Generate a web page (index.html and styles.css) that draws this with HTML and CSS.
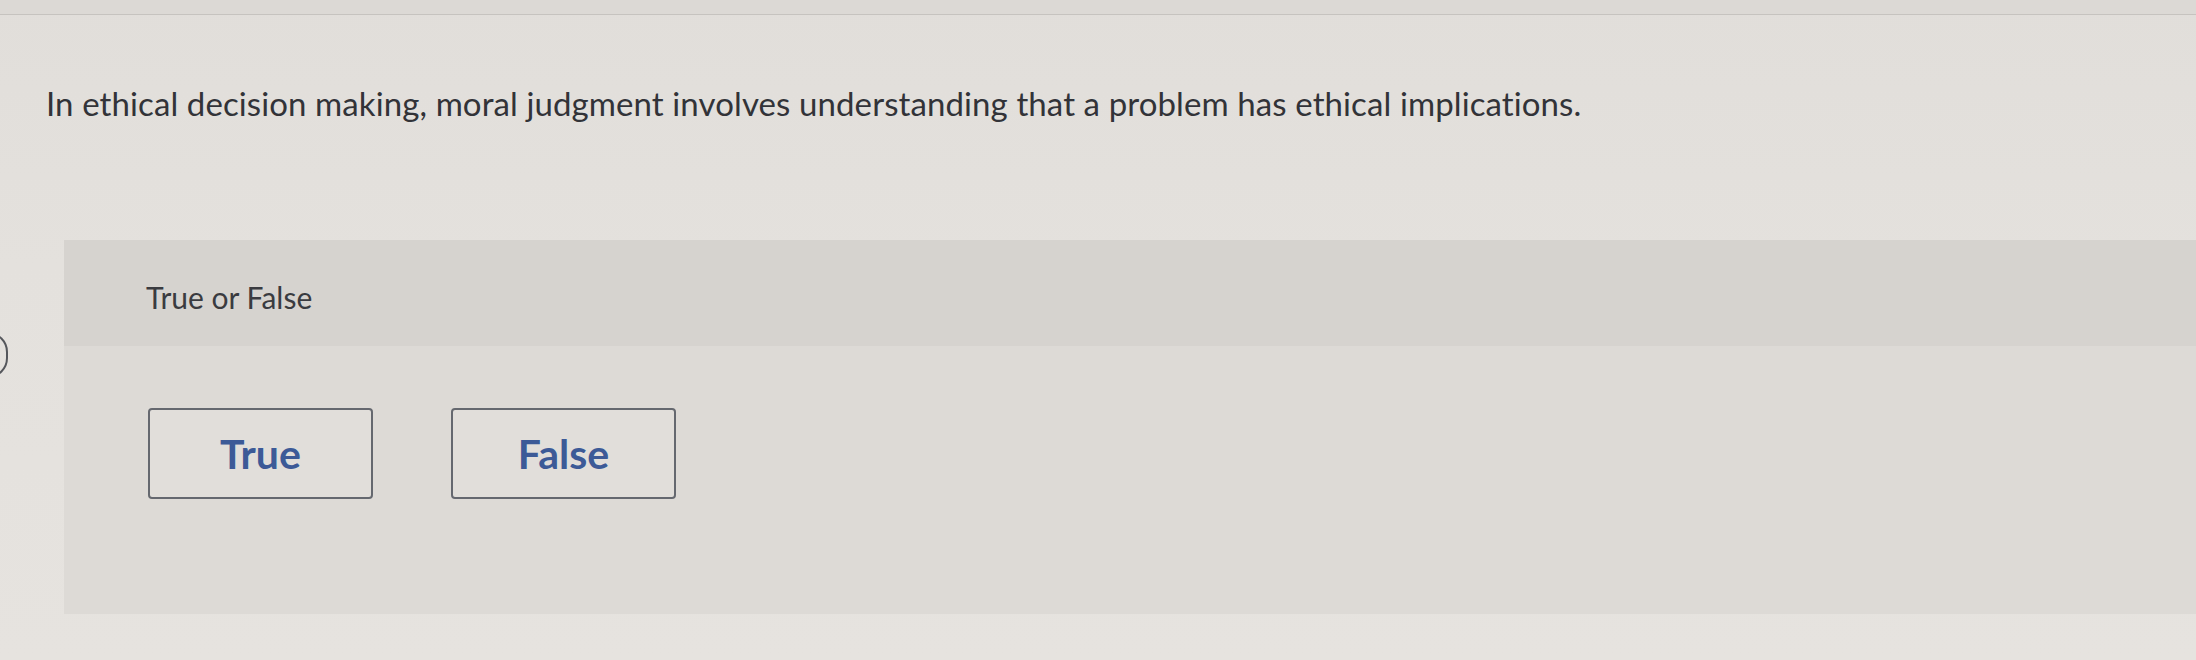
FILE: index.html
```html
<!DOCTYPE html>
<html lang="en">
<head>
  <meta charset="UTF-8">
  <title>True or False</title>
  <link rel="stylesheet" href="styles.css">
</head>
<body>
  <div class="top-strip"></div>

  <span class="side-handle"></span>

  <div class="prompt">
    <p>In ethical decision making, moral judgment involves understanding that a problem has ethical implications.</p>
  </div>

  <div class="question-panel">
    <div class="panel-head">True or False</div>
    <div class="panel-body">
      <div class="choices">
        <button class="choice">True</button>
        <button class="choice">False</button>
      </div>
    </div>
  </div>
</body>
</html>
```

FILE: styles.css
```css
    body {
      margin: 0;
      height: 660px;
      overflow: hidden;
      font-family: "Lato", "Liberation Sans", sans-serif;
      background: linear-gradient(to bottom, #e1deda 0%, #e4e1dd 40%, #e6e3df 100%);
      color: #2f3034;
      position: relative;
    }
    .top-strip {
      height: 14px;
      background: #dcd9d5;
      border-bottom: 1px solid #c6c3bf;
    }
    .prompt {
      padding: 69px 0 0 46px;
      height: 225px;
      box-sizing: border-box;
    }
    .prompt p {
      margin: 0;
      font-size: 33px;
      line-height: 38px;
      letter-spacing: 0.1px;
      color: #323338;
    }
    .question-panel {
      margin-left: 64px;
      background: #dddad6;
    }
    .panel-head {
      height: 106px;
      box-sizing: border-box;
      padding: 40px 0 0 82px;
      background: #d6d3cf;
      font-size: 30px;
      line-height: 34px;
      color: #3a3b40;
    }
    .panel-body {
      height: 268px;
      box-sizing: border-box;
      padding: 62px 0 0 84px;
    }
    .choices {
      display: flex;
      gap: 78px;
    }
    .choice {
      width: 225px;
      height: 91px;
      background: #e1deda;
      border: 2px solid #65686f;
      border-radius: 4px;
      font-family: "Lato", "Liberation Sans", sans-serif;
      font-weight: 700;
      font-size: 41px;
      color: #3c5a97;
      cursor: pointer;
    }
    /* edge of a control cut off by the window */
    .side-handle {
      position: absolute;
      left: -40px;
      top: 332px;
      width: 44px;
      height: 42px;
      border: 2px solid #55575c;
      border-radius: 20px;
    }
```
